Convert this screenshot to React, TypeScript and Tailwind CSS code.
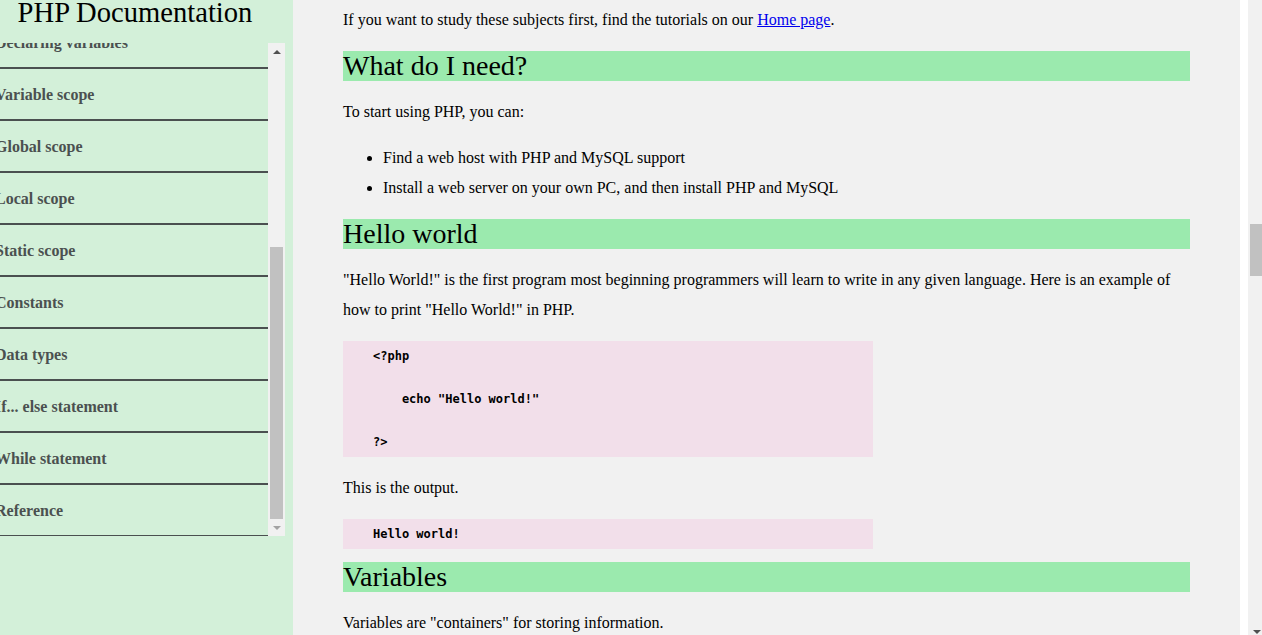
const navItems = [
  "Introduction",
  "Syntax",
  "Comments",
  "Variables",
  "Declaring variables",
  "Variable scope",
  "Global scope",
  "Local scope",
  "Static scope",
  "Constants",
  "Data types",
  "If... else statement",
  "While statement",
  "Reference",
];

const serif = "font-['Liberation_Serif','Times_New_Roman',serif]";

const Heading = ({ children }: { children: string }) => (
  <h2 className="mt-[13px] mb-[13px] bg-[#9beaae] text-[28px] leading-[30px] font-normal text-black">
    {children}
  </h2>
);

const Code = ({ lines }: { lines: string[] }) => (
  <pre className="mt-4 w-[530px] bg-[#f2dfea] pt-[5px] pb-[3px] pl-[30px] font-['DejaVu_Sans_Mono',monospace] text-[12px] leading-[21.6px] font-bold text-black">
    {lines.map((l, i) => (
      <div key={i} className="h-[21.6px] whitespace-pre">
        {l}
      </div>
    ))}
  </pre>
);

const Sidebar = () => (
  <aside className={`w-[293px] shrink-0 bg-[#d3f0d9] ${serif}`}>
    <div className="h-[43px] w-[270px] text-center text-[28.6px] leading-[25px] text-black">
      PHP Documentation
    </div>
    <div className="flex h-[493px] w-[285px]">
      <div className="w-[268px] overflow-hidden">
        <ul className="mt-[-234px]">
          {navItems.map((item) => (
            <li
              key={item}
              className="flex h-[52px] items-center border-b-2 border-[#4a5050] pt-[2px] text-[16px] font-bold text-[#4b5050]"
            >
              <span className="ml-[-5px] whitespace-nowrap">{item}</span>
            </li>
          ))}
        </ul>
      </div>
      <div className="flex w-[17px] flex-col bg-[#f1f1f1]">
        <div className="flex h-[17px] items-center justify-center">
          <div className="h-0 w-0 border-x-[4px] border-b-[4px] border-x-transparent border-b-[#505050]" />
        </div>
        <div className="flex flex-1 flex-col justify-end px-[2px]">
          <div className="h-[272px] bg-[#c1c1c1]" />
        </div>
        <div className="flex h-[17px] items-center justify-center">
          <div className="h-0 w-0 border-x-[4px] border-t-[4px] border-x-transparent border-t-[#a3a3a3]" />
        </div>
      </div>
    </div>
  </aside>
);

export default function App() {
  return (
    <div className="flex h-[635px] w-[1262px] overflow-hidden bg-white">
      <Sidebar />
      <main
        className={`w-[947px] shrink-0 overflow-hidden bg-[#f1f1f1] pl-[50px] pr-[50px] text-[16px] leading-[30px] text-black ${serif}`}
      >
        <p className="mt-[5px] mb-4">
          If you want to study these subjects first, find the tutorials on our{" "}
          <a href="#" className="text-[#0000ee] underline">
            Home page
          </a>
          .
        </p>
        <Heading>What do I need?</Heading>
        <p className="my-4">To start using PHP, you can:</p>
        <ul className="my-4 list-disc pl-10">
          <li>Find a web host with PHP and MySQL support</li>
          <li>Install a web server on your own PC, and then install PHP and MySQL</li>
        </ul>
        <Heading>Hello world</Heading>
        <p className="my-4">
          "Hello World!" is the first program most beginning programmers will learn to write in
          any given language. Here is an example of how to print "Hello World!" in PHP.
        </p>
        <Code lines={["<?php", "", '    echo "Hello world!"', "", "?>"]} />
        <p className="my-4">This is the output.</p>
        <Code lines={["Hello world!"]} />
        <Heading>Variables</Heading>
        <p className="my-4">Variables are "containers" for storing information.</p>
      </main>
      <div className="w-[8px] shrink-0 bg-white" />
      <div className="relative w-[14px] shrink-0 bg-[#f1f1f1]">
        <div className="ml-[2px] mt-[224px] h-[52px] bg-[#c1c1c1]" />
        <div className="absolute bottom-[1px] left-[5px] h-0 w-0 border-x-[4px] border-t-[4px] border-x-transparent border-t-[#505050]" />
      </div>
    </div>
  );
}
